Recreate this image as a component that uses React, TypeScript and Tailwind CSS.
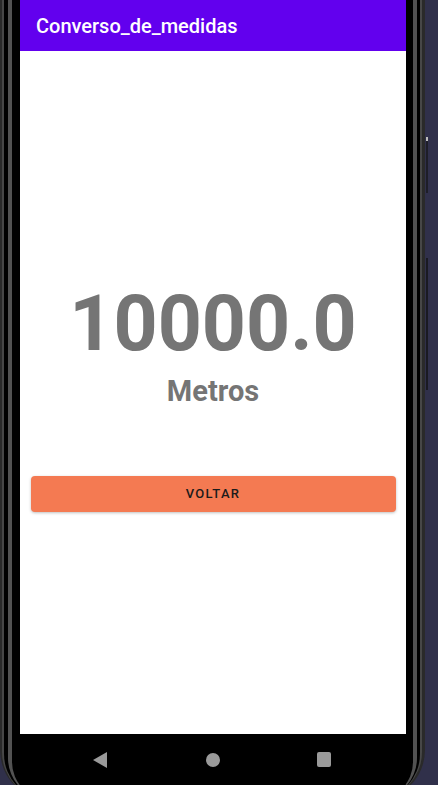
import React from 'react';

function NavBar() {
  return (
    <div className="flex h-[51px] items-center justify-between bg-black pl-[73px] pr-[75px]">
      {/* back */}
      <svg width="15" height="16" viewBox="0 0 15 16">
        <polygon points="14,0 14,16 0,8" fill="#9a9a9a" />
      </svg>
      {/* home */}
      <div className="h-[14px] w-[14px] rounded-full bg-[#9a9a9a]" />
      {/* recents */}
      <div className="h-[15px] w-[14px] rounded-[2px] bg-[#9a9a9a]" />
    </div>
  );
}

function Screen() {
  return (
    <div className="flex w-[386px] flex-col">
      {/* App bar */}
      <div className="flex h-[51px] items-center bg-[#6200ee] pl-[16px]">
        <span className="text-[20px] font-medium text-white">Converso_de_medidas</span>
      </div>

      {/* Content */}
      <div className="flex h-[683px] flex-col items-center bg-white pt-[235px]">
        <div className="text-[77px] font-bold leading-none text-[#757575]">10000.0</div>
        <div className="mt-[14px] text-[29px] font-bold leading-none text-[#757575]">Metros</div>
        <button className="mt-[70px] flex h-[36px] w-[365px] items-center justify-center rounded-[4px] bg-[#f47a52] shadow-[0_1px_3px_rgba(0,0,0,0.25)]">
          <span className="text-[13px] font-medium tracking-[0.1em] text-[#1b1b1b]">VOLTAR</span>
        </button>
      </div>

      <NavBar />
    </div>
  );
}

export default function App() {
  return (
    <div
      className="flex h-[785px] w-[438px] overflow-hidden bg-[#30304a]"
      style={{ fontFamily: 'Roboto, "Noto Sans", sans-serif' }}
    >
      {/* Phone bezel */}
      <div className="h-[800px] rounded-b-[50px] bg-[#2a2a2a] pl-[2px] pr-[3px]">
        <div className="h-full rounded-b-[48px] bg-[#474747] pl-[2px] pr-[2px]">
          <div className="h-full rounded-b-[46px] bg-black pl-[4px] pr-[3px]">
            <div className="h-full rounded-b-[42px] bg-[#525252] pl-[4px] pr-[4px]">
              <div className="h-full overflow-hidden rounded-b-[38px] bg-black pl-[8px] pr-[7px]">
                <Screen />
              </div>
            </div>
          </div>
        </div>
      </div>

      {/* Side buttons */}
      <div className="flex flex-col pl-[1px]">
        <div className="mt-[137px] h-[56px] w-[2px] bg-[#1e1e28]">
          <div className="h-[4px] w-[2px] bg-[#bdbdbd]" />
        </div>
        <div className="mt-[65px] h-[132px] w-[2px] bg-[#1a1a22]" />
      </div>
    </div>
  );
}
